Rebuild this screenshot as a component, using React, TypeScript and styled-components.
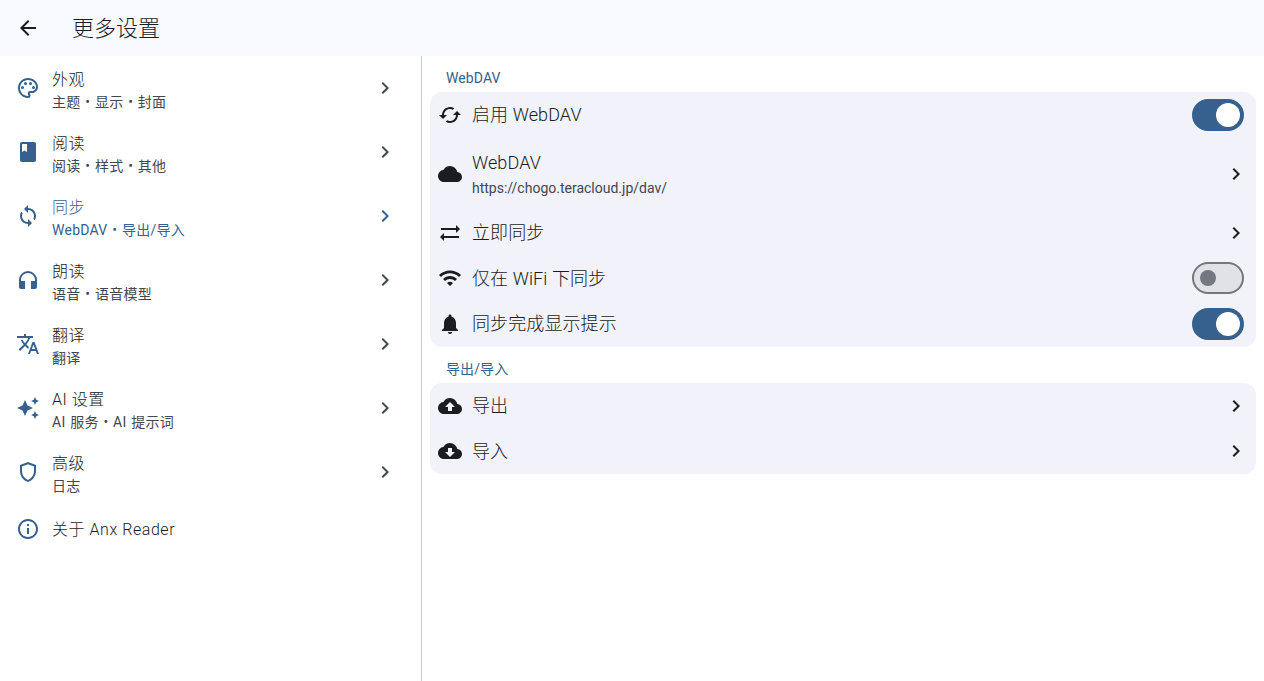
import * as React from 'react';
import styled, { createGlobalStyle } from 'styled-components';
import {
  MdArrowBack,
  MdOutlinePalette,
  MdBook,
  MdSync,
  MdHeadphones,
  MdTranslate,
  MdAutoAwesome,
  MdOutlineShield,
  MdInfoOutline,
  MdChevronRight,
  MdCached,
  MdCloud,
  MdSyncAlt,
  MdWifi,
  MdNotifications,
  MdCloudUpload,
  MdCloudDownload,
} from 'react-icons/md';

const PRIMARY = '#36618e';
const ON_SURFACE = '#191c20';
const VARIANT = '#43474e';

interface NavEntry {
  icon: React.ElementType;
  title: string;
  sub?: string;
  active?: boolean;
}

const navEntries: NavEntry[] = [
  { icon: MdOutlinePalette, title: '外观', sub: '主题 • 显示 • 封面' },
  { icon: MdBook, title: '阅读', sub: '阅读 • 样式 • 其他' },
  { icon: MdSync, title: '同步', sub: 'WebDAV • 导出/导入', active: true },
  { icon: MdHeadphones, title: '朗读', sub: '语音 • 语音模型' },
  { icon: MdTranslate, title: '翻译', sub: '翻译' },
  { icon: MdAutoAwesome, title: 'AI 设置', sub: 'AI 服务 • AI 提示词' },
  { icon: MdOutlineShield, title: '高级', sub: '日志' },
];

const App: React.FC = () => (
  <>
    <GlobalStyle />
    <Page>
      <AppBar>
        <BackButton>
          <MdArrowBack size={24} />
        </BackButton>
        <AppBarTitle>更多设置</AppBarTitle>
      </AppBar>
      <Body>
        <Sidebar>
          {navEntries.map((entry) => (
            <NavRow key={entry.title}>
              <NavIcon>
                <entry.icon size={24} />
              </NavIcon>
              <NavText>
                <NavTitle $active={entry.active}>{entry.title}</NavTitle>
                <NavSub $active={entry.active}>{entry.sub}</NavSub>
              </NavText>
              <NavChevron $active={entry.active}>
                <MdChevronRight size={24} />
              </NavChevron>
            </NavRow>
          ))}
          <AboutRow>
            <NavIcon>
              <MdInfoOutline size={24} />
            </NavIcon>
            <AboutTitle>关于 Anx Reader</AboutTitle>
          </AboutRow>
        </Sidebar>
        <Content>
          <SectionLabel>WebDAV</SectionLabel>
          <Card>
            <SettingRow>
              <SettingIcon>
                <MdCached size={24} />
              </SettingIcon>
              <SettingTitle>启用 WebDAV</SettingTitle>
              <Switch $on>
                <Thumb $on />
              </Switch>
            </SettingRow>
            <SettingRow $tall>
              <SettingIcon>
                <MdCloud size={24} />
              </SettingIcon>
              <SettingText>
                <SettingTitle>WebDAV</SettingTitle>
                <SettingSub>https://chogo.teracloud.jp/dav/</SettingSub>
              </SettingText>
              <RowChevron>
                <MdChevronRight size={24} />
              </RowChevron>
            </SettingRow>
            <SettingRow>
              <SettingIcon>
                <MdSyncAlt size={24} />
              </SettingIcon>
              <SettingTitle>立即同步</SettingTitle>
              <RowChevron>
                <MdChevronRight size={24} />
              </RowChevron>
            </SettingRow>
            <SettingRow>
              <SettingIcon>
                <MdWifi size={24} />
              </SettingIcon>
              <SettingTitle>仅在 WiFi 下同步</SettingTitle>
              <Switch>
                <Thumb />
              </Switch>
            </SettingRow>
            <SettingRow>
              <SettingIcon>
                <MdNotifications size={24} />
              </SettingIcon>
              <SettingTitle>同步完成显示提示</SettingTitle>
              <Switch $on>
                <Thumb $on />
              </Switch>
            </SettingRow>
          </Card>
          <SectionLabel>导出/导入</SectionLabel>
          <Card>
            <SettingRow>
              <SettingIcon>
                <MdCloudUpload size={24} />
              </SettingIcon>
              <SettingTitle>导出</SettingTitle>
              <RowChevron>
                <MdChevronRight size={24} />
              </RowChevron>
            </SettingRow>
            <SettingRow>
              <SettingIcon>
                <MdCloudDownload size={24} />
              </SettingIcon>
              <SettingTitle>导入</SettingTitle>
              <RowChevron>
                <MdChevronRight size={24} />
              </RowChevron>
            </SettingRow>
          </Card>
        </Content>
      </Body>
    </Page>
  </>
);

export default App;

const GlobalStyle = createGlobalStyle`
  html, body {
    margin: 0;
    padding: 0;
    background: #fff;
  }
  body {
    font-family: Roboto, "Noto Sans CJK SC", sans-serif;
    font-weight: 300;
    color: ${ON_SURFACE};
  }
`;

const Page = styled.div`
  display: flex;
  flex-direction: column;
  height: 681px;
  overflow: hidden;
`;

const AppBar = styled.header`
  display: flex;
  align-items: center;
  flex: 0 0 56px;
  background: #f8f9ff;
`;

const BackButton = styled.div`
  display: flex;
  justify-content: center;
  width: 56px;
  color: ${ON_SURFACE};
`;

const AppBarTitle = styled.h1`
  margin: 2px 0 0 16px;
  font-size: 22px;
  font-weight: 300;
  line-height: 28px;
`;

const Body = styled.div`
  display: flex;
  flex: 1;
  min-height: 0;
`;

const Sidebar = styled.nav`
  flex: 0 0 421px;
  border-right: 1px solid #c3c7cf;
`;

const NavRow = styled.div`
  display: flex;
  align-items: center;
  height: 64px;
  padding: 0 24px 0 16px;
`;

const AboutRow = styled.div`
  display: flex;
  align-items: center;
  height: 50px;
  padding: 0 24px 0 16px;
`;

const NavIcon = styled.span`
  display: flex;
  flex: 0 0 24px;
  margin-right: 12px;
  color: ${PRIMARY};
`;

const NavText = styled.div`
  display: flex;
  flex: 1;
  flex-direction: column;
  padding-top: 4px;
`;

const NavTitle = styled.span<{ $active?: boolean }>`
  font-size: 16px;
  line-height: 24px;
  letter-spacing: 0.55px;
  color: ${(p) => (p.$active ? PRIMARY : ON_SURFACE)};
`;

const AboutTitle = styled(NavTitle)`
  padding-top: 2px;
`;

const NavSub = styled.span<{ $active?: boolean }>`
  font-size: 14px;
  font-weight: 400;
  line-height: 20px;
  letter-spacing: 0.25px;
  word-spacing: 1px;
  color: ${(p) => (p.$active ? PRIMARY : VARIANT)};
`;

const NavChevron = styled.span<{ $active?: boolean }>`
  display: flex;
  color: ${(p) => (p.$active ? PRIMARY : VARIANT)};
`;

const Content = styled.main`
  flex: 1;
  padding: 0 8px;
`;

const SectionLabel = styled.div`
  padding-left: 16px;
  height: 36px;
  line-height: 45px;
  font-size: 14px;
  font-weight: 400;
  letter-spacing: 0.1px;
  color: ${PRIMARY};
`;

const Card = styled.section`
  border-radius: 12px;
  background: #f1f2fa;
`;

const SettingRow = styled.div<{ $tall?: boolean }>`
  display: flex;
  align-items: center;
  height: ${(p) => (p.$tall ? '72px' : '45.7px')};
  padding: 0 12px 0 8px;
`;

const SettingIcon = styled.span`
  display: flex;
  flex: 0 0 24px;
  margin-right: 10px;
  color: ${ON_SURFACE};
`;

const SettingText = styled.div`
  display: flex;
  flex: 1;
  flex-direction: column;
`;

const SettingTitle = styled.span`
  flex: 1;
  padding-top: 1px;
  font-size: 18px;
  line-height: 26px;
  letter-spacing: 0.1px;
  color: ${ON_SURFACE};
`;

const SettingSub = styled.span`
  padding-top: 1px;
  font-size: 14px;
  font-weight: 400;
  line-height: 22px;
  color: ${VARIANT};
`;

const RowChevron = styled.span`
  display: flex;
  margin-right: -4px;
  color: ${ON_SURFACE};
`;

const Switch = styled.span<{ $on?: boolean }>`
  display: flex;
  align-items: center;
  justify-content: ${(p) => (p.$on ? 'flex-end' : 'flex-start')};
  box-sizing: border-box;
  width: 52px;
  height: 32px;
  padding: ${(p) => (p.$on ? '0 2px' : '0 6px')};
  border-radius: 16px;
  border: 2px solid ${(p) => (p.$on ? PRIMARY : '#74777f')};
  background: ${(p) => (p.$on ? PRIMARY : '#e1e2e8')};
`;

const Thumb = styled.span<{ $on?: boolean }>`
  width: ${(p) => (p.$on ? '24px' : '16px')};
  height: ${(p) => (p.$on ? '24px' : '16px')};
  border-radius: 50%;
  background: ${(p) => (p.$on ? '#fff' : '#74777f')};
`;
